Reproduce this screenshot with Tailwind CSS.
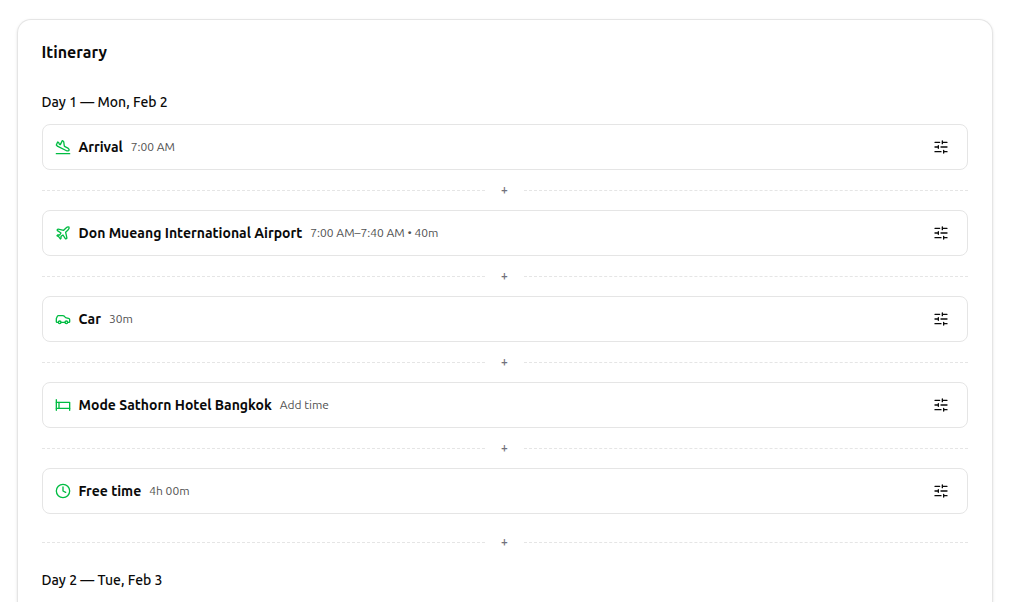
<!DOCTYPE html>
<html lang="en">
<head>
  <meta charset="UTF-8" />
  <meta name="viewport" content="width=device-width, initial-scale=1.0" />
  <title>Itinerary</title>
  <script src="https://cdn.jsdelivr.net/npm/@tailwindcss/browser@4"></script>
</head>
<body class="h-screen overflow-hidden bg-white pt-[19px] pr-[3px] font-['Ubuntu','Noto_Sans',sans-serif] text-neutral-950">

<!-- Shared icons -->
<svg class="hidden" aria-hidden="true">
  <symbol id="i-sliders" viewBox="0 0 24 24">
    <path d="M10 5H3M12 19H3M14 3v4M16 17v4M21 12h-9M21 19h-5M21 5h-7M8 10v4M8 12H3" />
  </symbol>
</svg>

<main class="mx-auto h-full max-w-[976px] rounded-t-[14px] border border-b-0 border-neutral-200 px-6 pt-6 shadow-sm">
  <h1 class="mb-8 text-base leading-4 font-semibold">Itinerary</h1>

  <!-- Day 1 -->
  <section>
    <h2 class="mb-3 text-sm leading-5 font-medium">Day 1 — Mon, Feb 2</h2>

    <div class="flex items-center gap-2 rounded-lg border border-neutral-200 px-3 py-2">
      <svg class="size-4 shrink-0 text-[#00bc42]" viewBox="0 0 24 24" fill="none" stroke="currentColor" stroke-width="2" stroke-linecap="round" stroke-linejoin="round"><path d="M2 22h20" /><path d="M3.77 10.77 2 9l2-4.5 1.1.55c.55.28.9.84.9 1.45s.35 1.17.9 1.45L8 8.5l3-6 1.05.53a2 2 0 0 1 1.09 1.52l.72 5.4a2 2 0 0 0 1.09 1.52l4.4 2.2c.42.22.78.55 1.01.96l.6 1.03c.49.88-.06 1.98-1.06 2.1l-1.18.15c-.47.06-.95-.02-1.37-.24L4.29 11.15a2 2 0 0 1-.52-.38Z" /></svg>
      <h3 class="text-sm font-semibold">Arrival</h3>
      <p class="text-xs text-neutral-600">7:00 AM</p>
      <button type="button" aria-label="Edit Arrival" class="ml-auto flex size-7 items-center justify-center">
        <svg class="size-4" fill="none" stroke="currentColor" stroke-width="2" stroke-linecap="round" stroke-linejoin="round"><use href="#i-sliders" /></svg>
      </button>
    </div>

    <div class="flex h-10 items-center gap-3">
      <div class="flex-1 border-t border-dashed border-neutral-200"></div>
      <button type="button" aria-label="Add stop" class="w-[15px] text-center text-xs leading-5 font-medium text-zinc-500">+</button>
      <div class="flex-1 border-t border-dashed border-neutral-200"></div>
    </div>

    <div class="flex items-center gap-2 rounded-lg border border-neutral-200 px-3 py-2">
      <svg class="size-4 shrink-0 text-[#00bc42]" viewBox="0 0 24 24" fill="none" stroke="currentColor" stroke-width="2" stroke-linecap="round" stroke-linejoin="round"><path d="M17.8 19.2 16 11l3.5-3.5C21 6 21.5 4 21 3c-1-.5-3 0-4.5 1.5L13 8 4.8 6.2c-.5-.1-.9.1-1.1.5l-.3.5c-.2.5-.1 1 .3 1.3L9 12l-2 3H4l-1 1 3 2 2 3 1-1v-3l3-2 3.5 5.3c.3.4.8.5 1.3.3l.5-.2c.4-.3.6-.7.5-1.2z" /></svg>
      <h3 class="text-sm font-semibold">Don Mueang International Airport</h3>
      <p class="text-xs text-neutral-600">7:00 AM–7:40 AM • 40m</p>
      <button type="button" aria-label="Edit Don Mueang International Airport" class="ml-auto flex size-7 items-center justify-center">
        <svg class="size-4" fill="none" stroke="currentColor" stroke-width="2" stroke-linecap="round" stroke-linejoin="round"><use href="#i-sliders" /></svg>
      </button>
    </div>

    <div class="flex h-10 items-center gap-3">
      <div class="flex-1 border-t border-dashed border-neutral-200"></div>
      <button type="button" aria-label="Add stop" class="w-[15px] text-center text-xs leading-5 font-medium text-zinc-500">+</button>
      <div class="flex-1 border-t border-dashed border-neutral-200"></div>
    </div>

    <div class="flex items-center gap-2 rounded-lg border border-neutral-200 px-3 py-2">
      <svg class="size-4 shrink-0 text-[#00bc42]" viewBox="0 0 24 24" fill="none" stroke="currentColor" stroke-width="2" stroke-linecap="round" stroke-linejoin="round"><path d="M19 17h2c.6 0 1-.4 1-1v-3c0-.9-.7-1.7-1.5-1.9C18.7 10.6 16 10 16 10s-1.3-1.4-2.2-2.3c-.5-.4-1.1-.7-1.8-.7H5c-.6 0-1.1.4-1.4.9l-1.4 2.9A3.7 3.7 0 0 0 2 12v4c0 .6.4 1 1 1h2" /><circle cx="7" cy="17" r="2" /><path d="M9 17h6" /><circle cx="17" cy="17" r="2" /></svg>
      <h3 class="text-sm font-semibold">Car</h3>
      <p class="text-xs text-neutral-600">30m</p>
      <button type="button" aria-label="Edit Car" class="ml-auto flex size-7 items-center justify-center">
        <svg class="size-4" fill="none" stroke="currentColor" stroke-width="2" stroke-linecap="round" stroke-linejoin="round"><use href="#i-sliders" /></svg>
      </button>
    </div>

    <div class="flex h-10 items-center gap-3">
      <div class="flex-1 border-t border-dashed border-neutral-200"></div>
      <button type="button" aria-label="Add stop" class="w-[15px] text-center text-xs leading-5 font-medium text-zinc-500">+</button>
      <div class="flex-1 border-t border-dashed border-neutral-200"></div>
    </div>

    <div class="flex items-center gap-2 rounded-lg border border-neutral-200 px-3 py-2">
      <svg class="size-4 shrink-0 text-[#00bc42]" viewBox="0 0 24 24" fill="none" stroke="currentColor" stroke-width="2" stroke-linecap="round" stroke-linejoin="round"><path d="M2 4v16" /><path d="M2 8h20v12" /><path d="M2 17h20" /><path d="M6 8v9" /></svg>
      <h3 class="text-sm font-semibold">Mode Sathorn Hotel Bangkok</h3>
      <p class="text-xs text-neutral-600">Add time</p>
      <button type="button" aria-label="Edit Mode Sathorn Hotel Bangkok" class="ml-auto flex size-7 items-center justify-center">
        <svg class="size-4" fill="none" stroke="currentColor" stroke-width="2" stroke-linecap="round" stroke-linejoin="round"><use href="#i-sliders" /></svg>
      </button>
    </div>

    <div class="flex h-10 items-center gap-3">
      <div class="flex-1 border-t border-dashed border-neutral-200"></div>
      <button type="button" aria-label="Add stop" class="w-[15px] text-center text-xs leading-5 font-medium text-zinc-500">+</button>
      <div class="flex-1 border-t border-dashed border-neutral-200"></div>
    </div>

    <div class="flex items-center gap-2 rounded-lg border border-neutral-200 px-3 py-2">
      <svg class="size-4 shrink-0 text-[#00bc42]" viewBox="0 0 24 24" fill="none" stroke="currentColor" stroke-width="2" stroke-linecap="round" stroke-linejoin="round"><circle cx="12" cy="12" r="10" /><path d="M12 6v6l4 2" /></svg>
      <h3 class="text-sm font-semibold">Free time</h3>
      <p class="text-xs text-neutral-600">4h 00m</p>
      <button type="button" aria-label="Edit Free time" class="ml-auto flex size-7 items-center justify-center">
        <svg class="size-4" fill="none" stroke="currentColor" stroke-width="2" stroke-linecap="round" stroke-linejoin="round"><use href="#i-sliders" /></svg>
      </button>
    </div>

    <div class="my-2 flex h-10 items-center gap-3">
      <div class="flex-1 border-t border-dashed border-neutral-200"></div>
      <button type="button" aria-label="Add stop" class="w-[15px] text-center text-xs leading-5 font-medium text-zinc-500">+</button>
      <div class="flex-1 border-t border-dashed border-neutral-200"></div>
    </div>
  </section>

  <!-- Day 2 -->
  <section>
    <h2 class="text-sm leading-5 font-medium">Day 2 — Tue, Feb 3</h2>
  </section>
</main>

</body>
</html>
